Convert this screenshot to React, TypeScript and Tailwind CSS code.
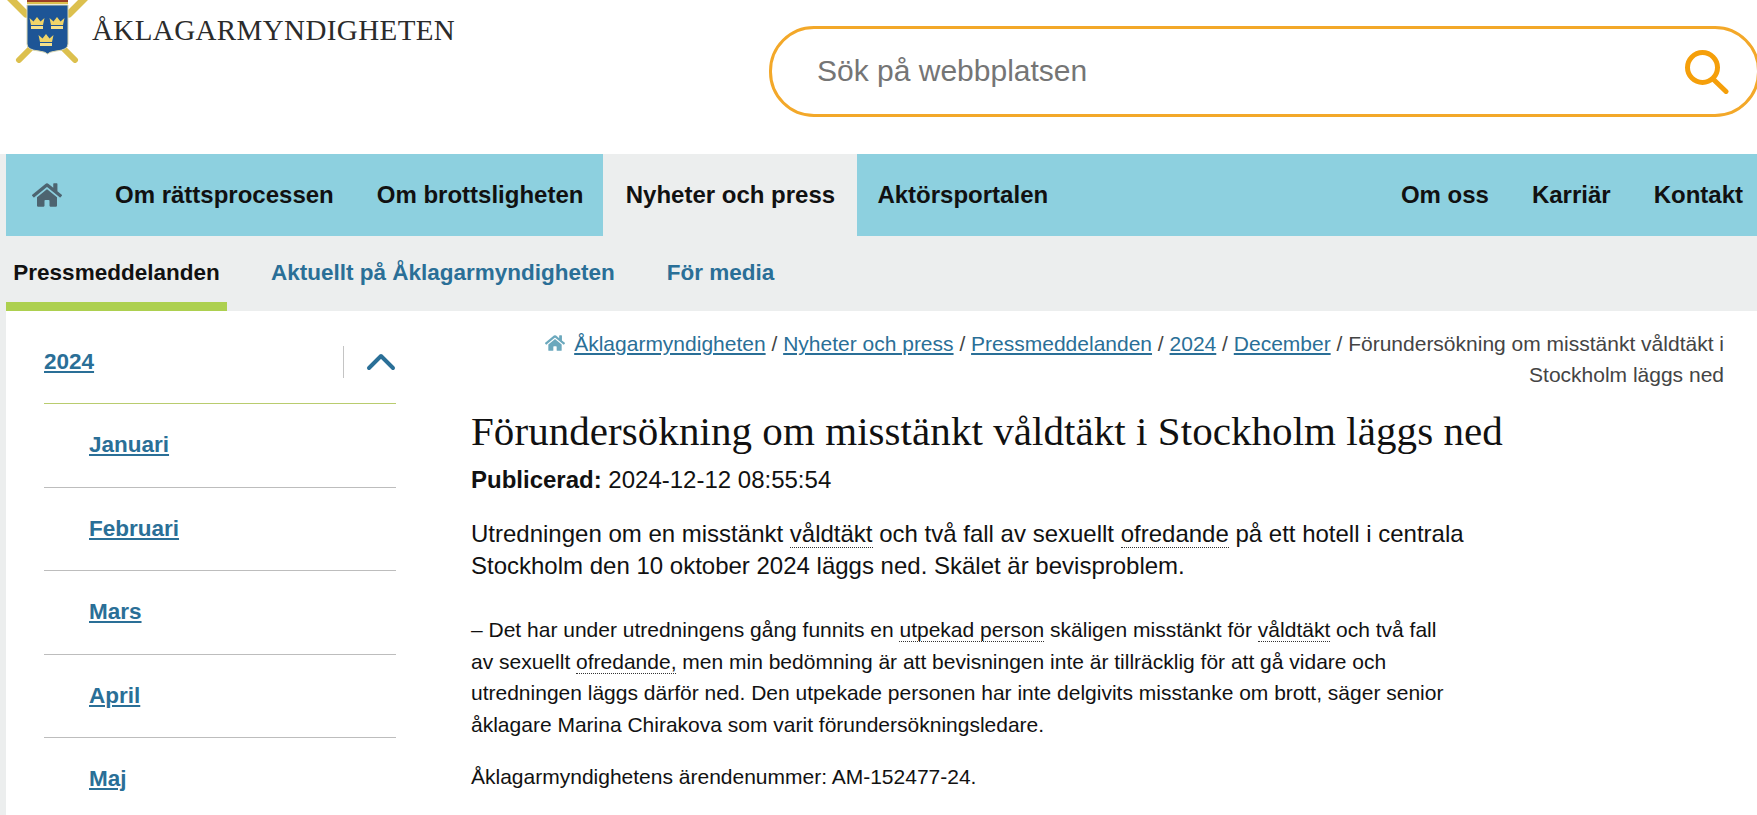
import React from 'react';
import { FaHome } from 'react-icons/fa';

const Term = ({ children }: { children: React.ReactNode }) => (
  <span className="border-b border-dotted border-[#333]">{children}</span>
);

const Crown = ({ x, y, s = 1 }: { x: number; y: number; s?: number }) => (
  <g transform={`translate(${x} ${y}) scale(${s})`}>
    <path d="M0 0 L-1.5 -7 L2.5 -3.5 L6 -8 L9.5 -3.5 L13.5 -7 L12 0 Z" fill="#f0d468" />
    <rect x="0" y="1" width="12" height="3" fill="#f5e08a" />
  </g>
);

const Crest = () => (
  <svg width="90" height="63" viewBox="0 0 90 63" className="shrink-0">
    <path d="M10 -2 L26 14" stroke="#dcc04e" strokeWidth="7" strokeLinecap="round" />
    <path d="M85 -2 L69 14" stroke="#dcc04e" strokeWidth="7" strokeLinecap="round" />
    <path d="M19 60 L31 48" stroke="#dcc04e" strokeWidth="6" strokeLinecap="round" />
    <path d="M75 60 L63 48" stroke="#dcc04e" strokeWidth="6" strokeLinecap="round" />
    <rect x="27" y="0" width="41" height="2" fill="#9c3f25" />
    <rect x="27" y="2" width="41" height="2" fill="#dcc04e" />
    <path d="M27 5 H68 V44 Q68 50 56 51 Q49 52 47.5 54 Q46 52 39 51 Q27 50 27 44 Z" fill="#1d5596" stroke="#d8d6b0" strokeWidth="1" />
    <Crown x={31} y={25} />
    <Crown x={51} y={25} />
    <Crown x={40} y={42} />
  </svg>
);

const months = ['Januari', 'Februari', 'Mars', 'April', 'Maj'];

export default function App() {
  return (
    <div className="h-[815px] overflow-hidden bg-white text-[#111] font-['Liberation_Sans',Arial,sans-serif]">
      <header className="flex h-[154px] items-start">
        <div className="flex w-[769px] shrink-0 items-start">
          <Crest />
          <span className="mt-[10px] ml-[2px] font-['Liberation_Serif',serif] text-[29px] leading-[40px] tracking-[0.4px] text-[#2b2b2b]">ÅKLAGARMYNDIGHETEN</span>
        </div>
        <div className="mt-[26px] mr-[-3px] flex h-[91px] grow items-center justify-between rounded-[45px] border-[3px] border-[#f3a829] pl-[45px] pr-[28px]">
          <span className="pb-[2px] text-[30px] text-[#757575]">Sök på webbplatsen</span>
          <svg width="44" height="44" viewBox="0 0 44 44" fill="none" stroke="#f59f0a" strokeWidth="5" strokeLinecap="round">
            <circle cx="17.5" cy="17.5" r="15" />
            <path d="M28 29 L41 41.5" />
          </svg>
        </div>
      </header>

      <div className="bg-[#eceeee] pl-[6px]">
        <nav className="flex h-[82px] items-center bg-[#8dd0df] text-[24px] font-bold text-[#111]">
          <span className="flex w-[109px] justify-start pl-[26px] text-[#4d6470]">
            <FaHome size={30} />
          </span>
          <span>Om rättsprocessen</span>
          <span className="ml-[43px]">Om brottsligheten</span>
          <span className="ml-[20px] flex h-full w-[254px] items-center justify-center bg-[#eceeee]">Nyheter och press</span>
          <span className="ml-[20px]">Aktörsportalen</span>
          <span className="ml-auto flex gap-[43px] pr-[14px]">
            <span>Om oss</span>
            <span>Karriär</span>
            <span>Kontakt</span>
          </span>
        </nav>
        <div className="flex h-[75px] text-[22.5px] font-bold text-[#2a6f97]">
          <span className="flex w-[221px] items-center justify-center border-b-[9px] border-[#add04f] pt-[8px] text-[#111]">Pressmeddelanden</span>
          <span className="flex items-center pl-[44px] pb-[1px]">Aktuellt på Åklagarmyndigheten</span>
          <span className="flex items-center pl-[52px] pb-[1px]">För media</span>
        </div>
      </div>

      <div className="flex h-[504px] bg-[#eceeee] pl-[6px]">
        <div className="flex grow bg-white">
          <aside className="ml-[38px] w-[352px] shrink-0 text-[22.5px] font-bold text-[#2a6f97]">
            <div className="flex h-[93px] items-center justify-between border-b border-[#b9cc6e] pt-[10px]">
              <a className="underline">2024</a>
              <div className="flex h-[32px] w-[53px] items-center justify-end border-l border-[#c4c4c4]">
                <svg width="30" height="18" viewBox="0 0 30 18" fill="none" stroke="#2a6f97" strokeWidth="4" strokeLinecap="round" strokeLinejoin="round">
                  <path d="M3 15 L15 3 L27 15" />
                </svg>
              </div>
            </div>
            {months.map((month) => (
              <div key={month} className="flex h-[83.5px] items-center border-b border-[#bdbdbd] pl-[45px]">
                <a className="underline">{month}</a>
              </div>
            ))}
          </aside>

          <main className="ml-[75px] grow pr-[33px]">
            <div className="pt-[17px] text-right text-[21px] leading-[31px] text-[#444]">
              <FaHome size={20} className="mr-[9px] inline align-[-2px] text-[#6ba8bd]" />
              <a className="text-[#2a6f97] underline">Åklagarmyndigheten</a> / <a className="text-[#2a6f97] underline">Nyheter och press</a> / <a className="text-[#2a6f97] underline">Pressmeddelanden</a> / <a className="text-[#2a6f97] underline">2024</a> / <a className="text-[#2a6f97] underline">December</a> / Förundersökning om misstänkt våldtäkt i
              <br />
              Stockholm läggs ned
            </div>
            <h1 className="mt-[16px] font-['Liberation_Serif',serif] text-[41px] leading-[50px] tracking-[0.06px] text-[#111]">Förundersökning om misstänkt våldtäkt i Stockholm läggs ned</h1>
            <p className="mt-[8px] text-[24px] leading-[32px]">
              <b>Publicerad:</b> 2024-12-12 08:55:54
            </p>
            <p className="mt-[22px] max-w-[993px] text-[24px] leading-[32px]">
              Utredningen om en misstänkt <Term>våldtäkt</Term> och två fall av sexuellt <Term>ofredande</Term> på ett hotell i centrala Stockholm den 10 oktober 2024 läggs ned. Skälet är bevisproblem.
            </p>
            <p className="mt-[32px] max-w-[993px] text-[21px] leading-[31.5px]">
              – Det har under utredningens gång funnits en <Term>utpekad person</Term> skäligen misstänkt för <Term>våldtäkt</Term> och två fall av sexuellt <Term>ofredande,</Term> men min bedömning är att bevisningen inte är tillräcklig för att gå vidare och utredningen läggs därför ned. Den utpekade personen har inte delgivits misstanke om brott, säger senior åklagare Marina Chirakova som varit förundersökningsledare.
            </p>
            <p className="mt-[21px] text-[21px] leading-[31.5px]">Åklagarmyndighetens ärendenummer: AM-152477-24.</p>
          </main>
        </div>
      </div>
    </div>
  );
}
